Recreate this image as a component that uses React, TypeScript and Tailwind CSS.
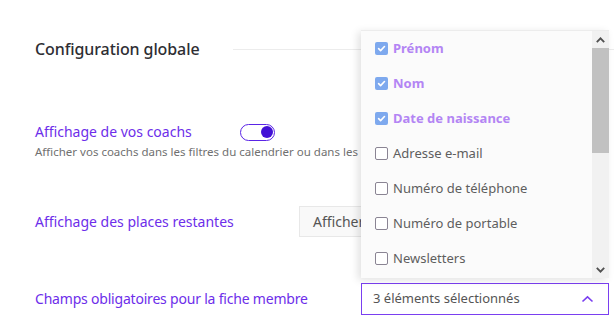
import React from "react";

const items = [
  { label: "Prénom", checked: true },
  { label: "Nom", checked: true },
  { label: "Date de naissance", checked: true },
  { label: "Adresse e-mail", checked: false },
  { label: "Numéro de téléphone", checked: false },
  { label: "Numéro de portable", checked: false },
  { label: "Newsletters", checked: false },
];

function Check({ checked }: { checked: boolean }) {
  if (checked) {
    return (
      <span className="flex h-[13px] w-[13px] items-center justify-center rounded-[2px] bg-[#7ea9ee]">
        <svg width="9" height="9" viewBox="0 0 10 10">
          <path d="M1.8 5.2 L4 7.3 L8.3 2.8" fill="none" stroke="white" strokeWidth="1.8" strokeLinecap="round" strokeLinejoin="round" />
        </svg>
      </span>
    );
  }
  return <span className="h-[13px] w-[13px] rounded-[2px] border-[1.5px] border-[#8a8493] bg-white" />;
}

export default function App() {
  return (
    <div
      className="relative h-[322px] w-[614px] overflow-hidden bg-white"
      style={{ fontFamily: '"Noto Sans", sans-serif' }}
    >
      <div className="pl-[35px] pt-[38px]">
        <div className="flex h-[22px] items-center">
          <h2 className="w-[198px] text-[16px] font-medium leading-none tracking-[-0.1px] text-[#2e2e33]">Configuration globale</h2>
          <div className="h-px flex-1 bg-[#ececec]" />
        </div>

        <div className="mt-[63px] flex items-center">
          <span className="w-[205px] text-[14px] leading-[18px] text-[#6d2eea]">Affichage de vos coachs</span>
          <span className="flex h-[17px] w-[35px] items-center justify-end rounded-full border-[1.5px] border-[#5a24e6] bg-white pr-[1px]">
            <span className="h-[12px] w-[12px] rounded-full bg-[#4210d6]" />
          </span>
        </div>
        <div className="mt-[3px] whitespace-nowrap text-[11.5px] leading-[16px] text-[#707070]">
          Afficher vos coachs dans les filtres du calendrier ou dans les
        </div>

        <div className="mt-[46px] flex items-center">
          <span className="w-[264px] text-[14px] leading-[18px] text-[#6d2eea]">Affichage des places restantes</span>
          <div className="flex h-[31px] w-[300px] items-center border border-[#e8e8e8] bg-[#f9f9f9] px-[13px] text-[14px] text-[#555]">
            Afficher
          </div>
        </div>

        <div className="mt-[46px] flex items-center">
          <span className="w-[326px] text-[14px] leading-[18px] tracking-[-0.2px] text-[#6d2eea]">Champs obligatoires pour la fiche membre</span>
          <div className="flex h-[32px] w-[248px] items-center justify-between border border-[#7a3ff0] bg-white pl-[11px] pr-[14px] text-[13px] text-[#555]">
            <span>3 éléments sélectionnés</span>
            <svg width="13" height="8" viewBox="0 0 13 8">
              <path d="M1.5 6.5 L6.5 1.8 L11.5 6.5" fill="none" stroke="#7a3ff0" strokeWidth="1.6" />
            </svg>
          </div>
        </div>
      </div>

      <div className="absolute left-[361px] top-[30px] flex h-[248px] w-[248px] border-t border-[#ececec] bg-[#fbfbfb] shadow-[-3px_2px_8px_rgba(0,0,0,0.12)]">
        <ul className="flex-1 pl-[14px]">
          {items.map((it) => (
            <li key={it.label} className="flex h-[35px] items-center gap-[5px]">
              <Check checked={it.checked} />
              <span
                className={
                  it.checked
                    ? "text-[13px] font-bold text-[#b385f4]"
                    : "text-[13px] text-[#5e5e5e]"
                }
              >
                {it.label}
              </span>
            </li>
          ))}
        </ul>
        <div className="flex w-[17px] flex-col bg-[#f1f1f1]">
          <div className="flex h-[17px] items-center justify-center">
            <svg width="9" height="6" viewBox="0 0 9 6"><path d="M0.8 5.2 L4.5 1.3 L8.2 5.2" fill="none" stroke="#505050" strokeWidth="1.8" /></svg>
          </div>
          <div className="mx-0 h-[105px] bg-[#c1c1c1]" />
          <div className="flex-1" />
          <div className="flex h-[17px] items-center justify-center">
            <svg width="9" height="6" viewBox="0 0 9 6"><path d="M0.8 0.8 L4.5 4.7 L8.2 0.8" fill="none" stroke="#505050" strokeWidth="1.8" /></svg>
          </div>
        </div>
      </div>
    </div>
  );
}
